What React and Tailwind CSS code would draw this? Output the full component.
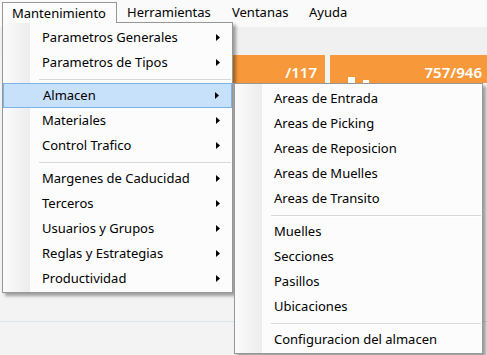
import { Fragment } from 'react';

const mainItems = [
    { label: 'Parametros Generales' },
    { label: 'Parametros de Tipos' },
    { sep: true },
    { label: 'Almacen', active: true },
    { label: 'Materiales' },
    { label: 'Control Trafico' },
    { sep: true },
    { label: 'Margenes de Caducidad' },
    { label: 'Terceros' },
    { label: 'Usuarios y Grupos' },
    { label: 'Reglas y Estrategias' },
    { label: 'Productividad' },
];

const subItems = [
    { label: 'Areas de Entrada' },
    { label: 'Areas de Picking' },
    { label: 'Areas de Reposicion' },
    { label: 'Areas de Muelles' },
    { label: 'Areas de Transito' },
    { sep: true },
    { label: 'Muelles' },
    { label: 'Secciones' },
    { label: 'Pasillos' },
    { label: 'Ubicaciones' },
    { sep: true },
    { label: 'Configuracion del almacen' },
];

function Arrow() {
    return (
        <svg width="4" height="7" viewBox="0 0 4 7" className="shrink-0">
            <polygon points="0,0 4,3.5 0,7" fill="#000" />
        </svg>
    );
}

function Separator() {
    return (
        <div className="h-[8px] pt-[4px] pl-[36px] pr-[1px]">
            <div className="h-px bg-[#d7d7d7]" />
            <div className="h-px bg-white" />
        </div>
    );
}

function MenuPanel({ items, withArrows, className }) {
    return (
        <div className={`absolute border border-[#979797] bg-[#fcfcfc] pt-[2px] pb-[1px] ${className}`}>
            {/* icon column */}
            <div className="absolute left-0 top-0 bottom-0 w-[27px] bg-gradient-to-r from-[#fbfbfb] to-[#ededed]" />
            <div className="relative">
                {items.map((item, i) => (
                    <Fragment key={i}>
                        {item.sep ? (
                            <Separator />
                        ) : (
                            <div
                                className={`flex h-[25px] items-center justify-between pl-[39px] pr-[12px] ${
                                    item.active ? 'border border-[#7ab2ea] bg-[#c8e1fa] pl-[38px]' : ''
                                }`}
                            >
                                <span className="whitespace-nowrap">{item.label}</span>
                                {withArrows && <Arrow />}
                            </div>
                        )}
                    </Fragment>
                ))}
            </div>
        </div>
    );
}

export default function App() {
    return (
        <div className="relative h-[355px] w-[487px] overflow-hidden bg-[#f3f3f3] font-['Noto_Sans',sans-serif] text-[13px] text-black">
            {/* Menu bar */}
            <div className="flex h-[27px] bg-[#fafafa] pt-[2px] pl-[2px]">
                <div className="relative z-20 h-[21px] w-[115px] border-x border-t border-[#979797] bg-[#fcfcfc] pl-[9px] leading-[21px]">
                    Mantenimiento
                </div>
                <div className="w-[106px] pl-[10px] leading-[21px]">Herramientas</div>
                <div className="w-[77px] pl-[9px] leading-[21px]">Ventanas</div>
                <div className="pl-[9px] leading-[21px]">Ayuda</div>
            </div>

            {/* Toolbar area */}
            <div className="h-[28px] bg-[#f0f0f0]" />

            {/* Tiles */}
            <div className="flex h-[28px] font-semibold text-[15px] text-white">
                <div className="ml-[10px] flex w-[317px] items-center justify-end bg-[#f7993a] pt-[7px] pr-[8px]">
                    /117
                </div>
                <div className="ml-[5px] flex w-[158px] items-center bg-[#f7993a] pt-[7px] pr-[5px]">
                    <svg width="40" height="21" viewBox="0 0 40 21" className="ml-[18px] shrink-0">
                        <rect x="0" y="15" width="7" height="6" fill="#fff" />
                        <rect x="15" y="18" width="6" height="3" fill="#fff" />
                    </svg>
                    <span className="ml-auto">757/946</span>
                </div>
            </div>

            {/* Content */}
            <div className="mt-[238px] h-px bg-[#dce3ea]" />

            {/* Dropdown */}
            <MenuPanel
                items={mainItems}
                withArrows
                className="left-[2px] top-[22px] z-10 w-[231px] shadow-[3px_3px_3px_rgba(0,0,0,0.35)]"
            />

            {/* Submenu */}
            <MenuPanel
                items={subItems}
                className="left-[234px] top-[83px] z-30 w-[249px] shadow-[3px_3px_3px_rgba(0,0,0,0.35)]"
            />
        </div>
    );
}
